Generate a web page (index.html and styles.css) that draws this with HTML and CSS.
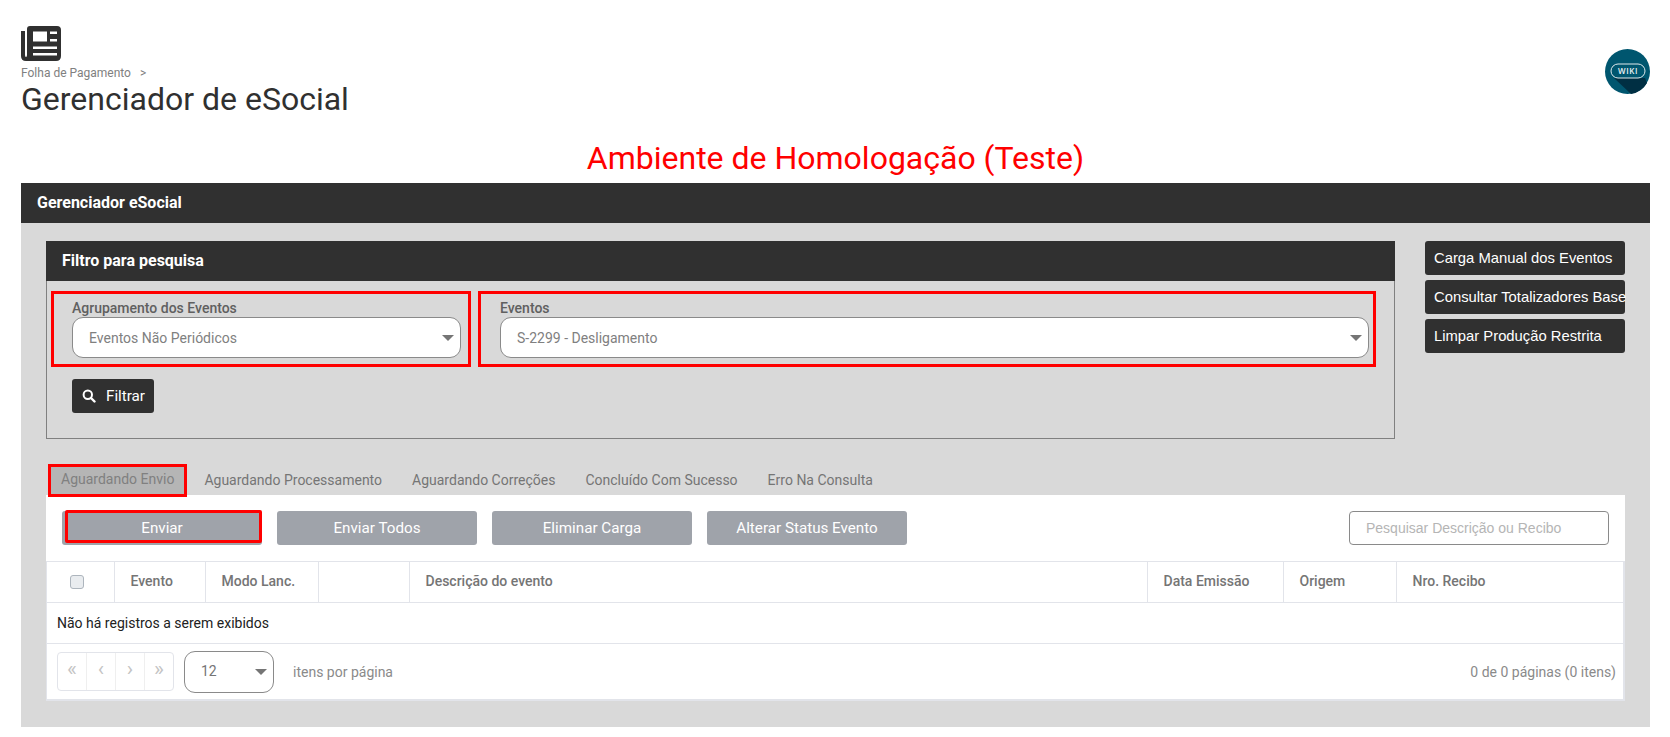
FILE: index.html
```html
<!DOCTYPE html>
<html lang="pt-BR">
<head>
    <meta charset="UTF-8">
    <title>Gerenciador de eSocial</title>
    <link rel="stylesheet" href="styles.css">
</head>
<body>

<header class="page-header">
    <div>
        <svg class="page-icon" viewBox="0 0 40 35">
            <path fill-rule="evenodd" fill="#303030" d="M9 0H36Q40 0 40 4V30Q40 35 35 35H5Q0 35 0 30V5H4V29Q4 31 5 31Q6 31 6 29V3Q6 0 9 0ZM12 5.5V15.5H26V5.5ZM29 5.5V8H36V5.5ZM29 13V15.5H36V13ZM12 20.5V23H36V20.5ZM12 27V29.5H36V27Z"/>
        </svg>
        <div class="breadcrumb">Folha de Pagamento <span class="crumb-sep">&gt;</span></div>
        <h1 class="page-title">Gerenciador de eSocial</h1>
    </div>
    <svg class="wiki-badge" viewBox="0 0 45 45">
        <circle cx="22.5" cy="22.5" r="22.5" fill="#00566f"/>
        <path d="M9 29L40 29L42 34A22.5 22.5 0 0 1 26 45Z" fill="#002f43"/>
        <rect x="6" y="15" width="34" height="14" rx="7" fill="#00566f" stroke="#dfe9ec" stroke-width="1"/>
        <text x="23" y="25" class="wiki-text" text-anchor="middle">WIKI</text>
    </svg>
</header>

<h2 class="env-title">Ambiente de Homologação (Teste)</h2>

<div class="panel-title">Gerenciador eSocial</div>

<main class="panel">
    <div class="top-row">
        <section class="filter">
            <div class="filter-title">Filtro para pesquisa</div>
            <div class="filter-body">
                <div class="filter-fields">
                    <div class="field field-group">
                        <label>Agrupamento dos Eventos</label>
                        <div class="select">Eventos Não Periódicos<span class="caret"></span></div>
                    </div>
                    <div class="field field-event">
                        <label>Eventos</label>
                        <div class="select">S-2299 - Desligamento<span class="caret"></span></div>
                    </div>
                </div>
                <button class="btn-filter">
                    <svg viewBox="0 0 14 14"><circle cx="5.8" cy="5.8" r="4.2" fill="none" stroke="#fff" stroke-width="2"/><path d="M9 9L12.5 12.5" stroke="#fff" stroke-width="2.4" stroke-linecap="round"/></svg>
                    Filtrar
                </button>
            </div>
        </section>
        <div class="side-actions">
            <button class="btn-side">Carga Manual dos Eventos</button>
            <button class="btn-side">Consultar Totalizadores Base</button>
            <button class="btn-side">Limpar Produção Restrita</button>
        </div>
    </div>

    <nav class="tabs">
        <a class="tab active">Aguardando Envio</a>
        <a class="tab">Aguardando Processamento</a>
        <a class="tab">Aguardando Correções</a>
        <a class="tab">Concluído Com Sucesso</a>
        <a class="tab">Erro Na Consulta</a>
    </nav>

    <section class="tab-content">
        <div class="toolbar">
            <button class="btn-action marked">Enviar</button>
            <button class="btn-action">Enviar Todos</button>
            <button class="btn-action">Eliminar Carga</button>
            <button class="btn-action">Alterar Status Evento</button>
            <input class="search" type="text" placeholder="Pesquisar Descrição ou Recibo">
        </div>

        <div class="grid">
            <table>
                <thead>
                    <tr>
                        <th class="col-check"><span class="checkbox"></span></th>
                        <th class="col-event">Evento</th>
                        <th class="col-mode">Modo Lanc.</th>
                        <th class="col-blank"></th>
                        <th>Descrição do evento</th>
                        <th class="col-date">Data Emissão</th>
                        <th class="col-origin">Origem</th>
                        <th class="col-receipt">Nro. Recibo</th>
                    </tr>
                </thead>
                <tbody>
                    <tr><td colspan="8">Não há registros a serem exibidos</td></tr>
                </tbody>
            </table>
            <div class="pager">
                <div class="pager-nav">
                    <span>&laquo;</span><span>&lsaquo;</span><span>&rsaquo;</span><span>&raquo;</span>
                </div>
                <div class="page-size">12<span class="caret"></span></div>
                <span class="page-size-label">itens por página</span>
                <span class="pager-info">0 de 0 páginas (0 itens)</span>
            </div>
        </div>
    </section>
</main>

</body>
</html>
```

FILE: styles.css
```css
body {
    font-family: Roboto, sans-serif;
    margin: 0;
    padding: 0 20px 0 21px;
    background-color: #ffffff;
    color: #303030;
    overflow: hidden;
}

button {
    font-family: inherit;
    cursor: pointer;
}

.page-header {
    display: flex;
    justify-content: space-between;
    align-items: flex-start;
    padding-top: 26px;
}

.page-icon {
    display: block;
    width: 40px;
    height: 35px;
}

.breadcrumb {
    margin-top: 5px;
    font-size: 12px;
    line-height: 14px;
    color: #808080;
}

.crumb-sep {
    margin-left: 6px;
}

.page-title {
    margin: 0;
    font-size: 32px;
    font-weight: 400;
    line-height: 38px;
    color: #303030;
}

.wiki-badge {
    width: 45px;
    height: 45px;
    margin-top: 23px;
}

.wiki-text {
    font-family: "Open Sans", sans-serif;
    font-size: 8px;
    font-weight: 600;
    letter-spacing: 0.6px;
    fill: #eef4f6;
}

.env-title {
    margin: 22px 0 7px;
    font-size: 32px;
    font-weight: 400;
    line-height: 36px;
    text-align: center;
    color: #ff0000;
}

.panel-title {
    height: 40px;
    padding-left: 16px;
    background-color: #303030;
    color: #ffffff;
    font-size: 16px;
    font-weight: 700;
    line-height: 40px;
}

.panel {
    padding: 18px 25px 26px;
    background-color: #d9d9d9;
}

.top-row {
    display: flex;
    gap: 30px;
}

.filter {
    flex: 1;
    border: 1px solid #808080;
    border-top: none;
}

.filter-title {
    height: 40px;
    margin: 0 -1px;
    padding-left: 16px;
    background-color: #303030;
    color: #ffffff;
    font-size: 16px;
    font-weight: 700;
    line-height: 40px;
}

.filter-body {
    height: 157px;
    padding: 10px 0 0 4px;
    box-sizing: border-box;
}

.filter-fields {
    display: flex;
    gap: 7px;
}

.field {
    box-sizing: border-box;
    height: 76px;
    padding: 7px 7px 0 18px;
    border: 3px solid #ff0000;
}

.field-group {
    width: 420px;
}

.field-event {
    width: 898px;
    padding-left: 19px;
    padding-right: 4px;
}

.field label {
    display: block;
    font-size: 14px;
    font-weight: 500;
    line-height: 15px;
    color: #606060;
}

.select {
    position: relative;
    box-sizing: border-box;
    height: 41px;
    margin-top: 1px;
    padding-left: 16px;
    background-color: #ffffff;
    border: 1px solid #8a8a8a;
    border-radius: 11px;
    font-size: 14px;
    line-height: 40px;
    color: #808080;
}

.caret {
    position: absolute;
    right: 6px;
    top: 17px;
    width: 0;
    height: 0;
    border-left: 6px solid transparent;
    border-right: 6px solid transparent;
    border-top: 6px solid #757575;
}

.btn-filter {
    display: flex;
    align-items: center;
    gap: 10px;
    width: 82px;
    height: 34px;
    margin: 12px 0 0 21px;
    padding: 0 0 0 10px;
    background-color: #303030;
    color: #ffffff;
    border: none;
    border-radius: 3px;
    font-size: 15.2px;
}

.btn-filter svg {
    width: 14px;
    height: 14px;
}

.side-actions {
    display: flex;
    flex-direction: column;
    gap: 5px;
    width: 200px;
}

.btn-side {
    height: 34px;
    padding: 0 0 1px 9px;
    background-color: #303030;
    color: #ffffff;
    border: none;
    border-radius: 3px;
    font-family: "Liberation Sans", sans-serif;
    font-size: 14.8px;
    text-align: left;
    white-space: nowrap;
}

.tabs {
    display: flex;
    align-items: center;
    height: 30px;
    margin-top: 26px;
    padding-left: 2px;
}

.tab {
    font-size: 14px;
    line-height: 25px;
    color: #757575;
    padding: 0 12px;
    margin-right: 6px;
}

.tab.active {
    box-sizing: border-box;
    height: 33px;
    margin-right: 5px;
    padding: 0 10px;
    border: 3px solid #ff0000;
    background-color: #b5b5b5;
    color: #808080;
}

.tab-content {
    background-color: #ffffff;
    padding-top: 16px;
}

.toolbar {
    display: flex;
    gap: 15px;
    padding: 0 16px;
}

.btn-action {
    width: 200px;
    height: 34px;
    padding: 0;
    background-color: #9fa3aa;
    color: #ffffff;
    border: none;
    border-radius: 3px;
    font-size: 15.2px;
}

.btn-action.marked {
    position: relative;
}

/* red highlight drawn over the first button */
.btn-action.marked::after {
    content: "";
    position: absolute;
    top: -1px;
    left: 3px;
    right: 0;
    bottom: 2px;
    border: 3px solid #ff0000;
    border-radius: 2px;
}

.search {
    width: 260px;
    height: 34px;
    box-sizing: border-box;
    margin-left: auto;
    padding: 0 16px;
    border: 1px solid #8a8a8a;
    border-radius: 4px;
    font-family: "Liberation Sans", sans-serif;
    font-size: 14px;
}

.search::placeholder {
    color: #b5b5b5;
}

.grid {
    margin-top: 16px;
    border-left: 1px solid #e2e4ea;
    border-right: 2px solid #e2e4ea;
    border-bottom: 2px solid #e2e4ea;
}

table {
    width: 100%;
    table-layout: fixed;
    border-collapse: collapse;
}

th {
    box-sizing: border-box;
    height: 41px;
    padding: 0 16px 2px;
    border-top: 1px solid #e2e4ea;
    border-bottom: 1px solid #e2e4ea;
    border-left: 1px solid #e2e4ea;
    font-size: 14px;
    font-weight: 500;
    text-align: left;
    color: #757575;
}

th:first-child {
    border-left: none;
}

td {
    height: 41px;
    box-sizing: border-box;
    padding: 0 10px;
    border-bottom: 1px solid #e2e4ea;
    font-size: 14px;
    color: #212121;
}

.col-check { width: 67px; padding-left: 23px; }
.col-event { width: 91px; }
.col-mode { width: 113px; }
.col-blank { width: 91px; }
.col-date { width: 136px; }
.col-origin { width: 113px; }
.col-receipt { width: 227px; }

.checkbox {
    display: inline-block;
    box-sizing: border-box;
    width: 14px;
    height: 14px;
    background-color: #e9ecef;
    border: 1px solid #adb5bd;
    border-radius: 3px;
    vertical-align: middle;
}

.pager {
    display: flex;
    align-items: center;
    height: 55px;
    padding: 0 7px 0 10px;
}

.pager-nav {
    display: flex;
    box-sizing: border-box;
    width: 117px;
    height: 39px;
    border: 1px solid #e2e4ea;
    border-radius: 4px;
    color: #c4c4c4;
}

.pager-nav span {
    flex: 1;
    border-left: 1px solid #efefef;
    text-align: center;
    font-size: 21px;
    line-height: 33px;
}

.pager-nav span:first-child {
    border-left: none;
}

.page-size {
    position: relative;
    box-sizing: border-box;
    width: 90px;
    height: 42px;
    margin-left: 10px;
    padding-left: 16px;
    border: 1px solid #8a8a8a;
    border-radius: 11px;
    font-size: 14px;
    line-height: 38px;
    color: #757575;
}

.page-size-label {
    margin-left: 19px;
    font-size: 14px;
    color: #8a8a8a;
}

.pager-info {
    margin-left: auto;
    font-size: 14px;
    color: #8a8a8a;
}
```
